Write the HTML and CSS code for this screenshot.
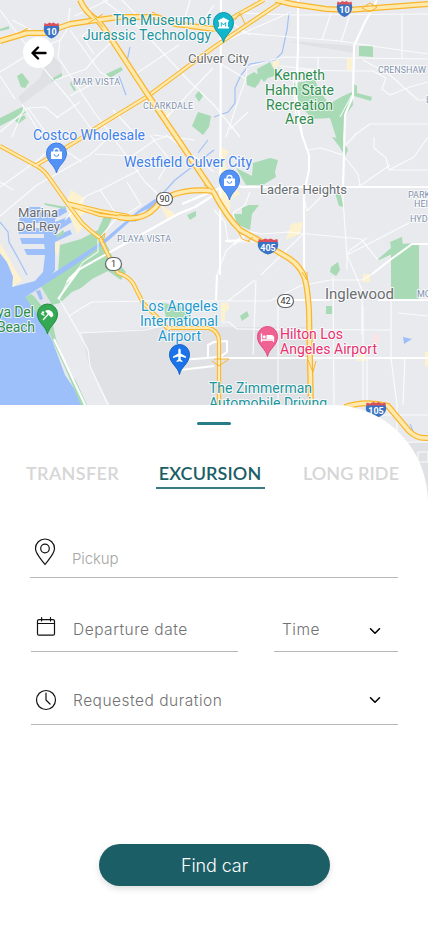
FILE: index.html
```html
<!DOCTYPE html>
<html lang="en">
<head>
<meta charset="utf-8">
<meta name="viewport" content="width=device-width">
<title>Book an excursion</title>
<link rel="stylesheet" href="styles.css">
</head>
<body>
<main class="screen">
<section class="map">
<svg class="map-art" viewBox="0 0 428 512" width="428" height="512">
  <defs>
    <path id="pin" d="M0 19C-1.5 11-10 8-10-1A10 10 0 1 1 10-1C10 8 1.500 11 0 19Z"/>
    <g id="shield">
      <path fill="#3b73c4" d="M-7-5H7C9 0 7 6 0 8.500C-7 6-9 0-7-5Z"/>
      <path fill="#d9525b" d="M-7.500-4L-7-7L-4.500-6L-2-7.500L0-6.500L2-7.500L4.500-6L7-7L7.500-4Z"/>
    </g>
  </defs>
  <rect width="428" height="512" fill="#e8eaed"/>
  <path fill="#e0e1e4" d="M50 52L61 65L62 75L22 104L18 97L40 78ZM82 333L170 327H310V405H110L88 363ZM290 41L355 46V53L300 44ZM402 440L428 443V512H402Z"/>

  <g class="water">
    <path d="M0 253L7 262L13 277L12 288L22 294L30 300L40 318L52 340L65 375L85 405H0Z"/>
    <path d="M28 207H40L45 212L50 214L65 206L67 212L55 219V222L70 216L72 222L56 232L58 235L70 230L72 234L55 242V270L45 283L14 302L5 300L12 287L35 281L43 272L45 255H27L24 249H45L44 244H22L20 238H44V234H19L18 228H44L42 223H20L19 216H28Z"/>
    <path d="M403 337L412 339L404 344Z"/>
  </g>
  <g class="sand">
    <path d="M0 243L10 260L17 273L22 280L13 287L13 275L7 262L0 253ZM67 202L71 190L84 198L84 214L80 216L83 226L78 234L69 216ZM221 147L229 152L224 160L228 174L240 194L230 200V216L222 205L219 180ZM160 205L172 211L176 217L168 220ZM291 224L303 222L300 234L286 240ZM347 58H352V70H347ZM273 60H279V66L273 69ZM363 274H370V282H363ZM221 303H229V309L225 312V320L221 322ZM276 301H285V306H276ZM357 355H366V361H357ZM425 352H428V366H425ZM165 111L169 111L169 121L166 123ZM55 243L60 241L58 256L55 252Z"/>
    <path class="pink" d="M373 334H379V343H373Z"/>
  </g>
  <g class="park">
    <path d="M0 118L22 107L27 112L0 126ZM17 76L22 73L29 82L25 88L21 87ZM51 79L62 73V76L53 82ZM106 74L121 67L123 70L110 78ZM71 81L76 90L74 91L70 84ZM15 120L24 115L26 118L18 124ZM0 29L9 26V29L0 31ZM195 96L199 90L203 96L199 102ZM198 112L211 116L209 127L203 135L192 126Z"/>
    <path d="M246 77L254 72L262 77L259 83L255 88L247 85ZM257 69L270 62L277 75L268 78L264 82L258 75ZM359 46H373V57L359 56ZM294 83L315 80L319 90L329 104L343 96L352 92L353 105L345 116L343 140H337L330 118L313 119L304 110L293 92ZM354 84L357 86V93L372 97L371 101L354 96Z"/>
    <path d="M236 168L252 176L253 163L270 158L278 160L275 172L276 177L263 185H246ZM234 214H242V208L249 205L259 205L252 214L250 230L234 223ZM332 137L343 139L348 150L345 156L339 146ZM335 193H340L344 207L339 206ZM377 260L391 248L390 242L402 237L403 249L379 260ZM391 254L400 244L419 243V300H391ZM331 267L338 262L340 270L336 276L330 272ZM240 316L247 311L249 316L242 321ZM326 306H332V314H326ZM187 215L196 211V216L190 220Z"/>
    <path d="M104 216L112 218L103 237L112 256L126 272L121 280L108 271L92 279L81 288L72 292L60 303L52 305L44 306L34 292L58 273L60 245L81 239L98 230ZM25 297L31 294L49 306L56 339L68 371L76 381L87 405H81L65 368L45 324L35 311ZM44 203L66 207L64 209L45 205ZM163 303L185 307L191 318L178 324L166 318ZM56 236L63 230L65 233L58 238Z"/>
  </g>
  <path class="island" d="M30 291L40 285L51 303L44 307L40 304Z"/>
  <path fill="#9dbffa" d="M36 291L40 290L43 299L40 300ZM14 298L72 261L101 242L139 210L155 199L160 203L139 213L109 240L75 265L16 303Z"/>
  <g class="stream">
    <path d="M289 13L287 30L282 53L275 60L250 64L241 75L235 88V103L228 112L214 117"/>
    <path d="M214 150L175 180L145 213M130 47L127 61M119 76L126 95M0 222L8 232L9 242L18 258L27 275M130 221H136M410 424L415 436M208 140L198 153"/>
  </g>

  <g class="street">
    <path d="M0 72L34 51L60 40L67 30L70 8M60 40L58 57L94 112L115 140L145 182L160 196M0 10L45 70L70 100L100 141M16 33L0 38M12 20L35 32L45 33M103 0L140 28L190 82L214 105L240 137M70 30L100 72L119 84M0 76L15 99M22 104L44 140M91 29L82 36L94 54M55 80L86 69L97 56L120 34M70 96L94 83M56 118L80 102M134 75L179 45M113 110L134 133M165 119L213 68M176 75L160 90M108 0L75 16M122 0L147 26M190 0L184 22M214 5L201 24"/>
    <path d="M0 132L28 108L45 107L58 118M0 187L38 160L60 140M0 216L37 185L90 155L110 136M13 190L0 182M24 108L12 137M28 108L51 140M50 140L82 162M95 154L132 156L155 140L165 137M65 220L86 196L100 190L139 170M100 190L119 218M127 182L141 205L118 220M120 214L98 240V252L83 262L76 272M150 135L170 160L158 180M166 135L214 172M153 135L195 140"/>
    <path d="M237 13L295 15L428 14M331 13L322 40M350 14L341 42M402 14V58M232 22L244 33L265 35L340 41L379 47L428 54M214 48L227 40L264 24L291 12M214 60L246 79L240 95L226 137M230 22L250 35M246 78L247 67L283 57L428 59M318 57V70L280 66M295 70L352 71L373 71L386 78L382 89L390 95L410 87L428 82M363 60L390 75L418 100H428M293 70L295 110L303 140M352 95L340 117M343 148L356 134L370 124L428 124M374 137V148L386 158L389 170L414 157L428 137M389 170H428M230 129L248 112"/>
    <path d="M308 150L321 148L343 155L358 174L360 184L357 188M357 188L390 165M303 193L307 211L318 200L325 192M234 245L250 232M242 230L262 234L288 232L361 239L378 260M367 238L350 250L347 255V270M344 155L343 200L347 255M347 255L409 223M347 255L362 290V335M228 242H255M214 210L225 222L228 242M244 234L226 251L217 275M238 230L233 213L245 205L250 192M303 234L261 275"/>
    <path d="M214 301H270L300 286L330 280L362 280L372 274M228 301L255 280M256 281L253 355M221 322L229 322L237 329L391 330M278 302V358M333 277L334 405M391 300V358L397 405M363 305V405M405 357L403 405M398 313L428 316M278 357V405M397 405V512M367 358V425M330 415H428M365 443L428 442M390 430V512M402 442H428M418 452H428V462H418Z"/>
    <path d="M59 300L69 278L79 270M60 300L79 333L88 350L90 366L108 405L114 418M69 316L80 309L92 302L150 301H214M80 333L145 330L166 325"/>
  </g>
  <g class="avenue">
    <path d="M67 282L78 270L178 214L195 207L214 195M182 204L230 184L242 187H428M298 0V50L296 94L302 135L309 155V170L304 193V280M377 0L365 22L354 46L353 96L345 115L344 153L343 188M221 0L220 275M58 299L79 270M214 358H428M225 241L245 240M217 275L216 300M54 339L87 409M372 274L390 260L412 244H428M285 300H330M378 300H428M180 370L214 366M180 360L220 357M208 357V345L214 342L227 341V352L220 357"/>
  </g>

  <g class="road-edge">
    <path d="M0 146L33 164Q42 168 48 176L67 203L82 223Q90 231 100 238L110 259L118 273Q128 276 133 283L143 303L158 318L167 328H209Q219 331 219 342V405"/>
    <path d="M35 166L80 139L99 126L148 96L214 47L281 2M214 30L237 15L264 0M67 203L100 211L129 216M67 204L100 215L132 219"/>
  </g>
  <g class="road-fill">
    <path d="M0 146L33 164Q42 168 48 176L67 203L82 223Q90 231 100 238L110 259L118 273Q128 276 133 283L143 303L158 318L167 328H209Q219 331 219 342V405"/>
    <path d="M35 166L80 139L99 126L148 96L214 47L281 2M214 30L237 15L264 0M67 203L100 211L129 216M67 204L100 215L132 219"/>
  </g>
  <g class="freeway-edge">
    <path d="M80 0Q85 12 97 20C105 27 110 38 150 98L175 135L214 193Q226 216 240 230L260 241L290 259C307 271 307 285 309 310L311 410"/>
    <path d="M0 41L27 33H45L70 24L97 20L120 17H157L175 24L214 29M276 0L292 4L326 9L348 10L428 4M118 217Q142 222 155 208Q171 187 214 191M345 407Q365 400 388 406L409 431Q417 439 428 438"/>
  </g>
  <g class="freeway-fill">
    <path d="M80 0Q85 12 97 20C105 27 110 38 150 98L175 135L214 193Q226 216 240 230L260 241L290 259C307 271 307 285 309 310L311 410"/>
    <path d="M0 41L27 33H45L70 24L97 20L120 17H157L175 24L214 29M276 0L292 4L326 9L348 10L428 4M118 217Q142 222 155 208Q171 187 214 191M345 407Q365 400 388 406L409 431Q417 439 428 438"/>
  </g>
  <g class="ramp">
    <path d="M87 24L103 14M91 13L103 27M148 17L153 12L159 17M19 33L28 28M235 20L240 13L245 24M362 8L370 3L377 7L370 12ZM99 239L105 233L103 243M238 231L242 239L250 242M248 241L253 237M213 190L204 185M302 272L307 280V272M308 360L313 372L316 361M214 359H229L219 366L212 361"/>
  </g>

  <g class="route">
    <rect x="156.500" y="192.500" width="16" height="13" rx="6.500"/><text x="164.500" y="202.300">90</text>
    <rect x="105.500" y="257.500" width="16" height="13" rx="6.500"/><text x="113.500" y="267.300">1</text>
    <rect x="277.500" y="294.500" width="16" height="13" rx="6.500"/><text x="285.500" y="304.300">42</text>
  </g>
  <g class="interstate">
    <use href="#shield" x="51.500" y="30"/><text x="51.500" y="34.500">10</text>
    <use href="#shield" x="344.500" y="8.500"/><text x="344.500" y="13">10</text>
    <use href="#shield" transform="translate(268 246) scale(1.32 1)"/><text x="268" y="251">405</text>
    <use href="#shield" transform="translate(376 409.500) scale(1.320 1)"/><text x="376" y="414.200">105</text>
  </g>

  <g class="label district">
    <text x="73" y="84.500" textLength="47">MAR VISTA</text>
    <text x="143" y="108.500" textLength="50">CLARKDALE</text>
    <text x="117" y="241.500" textLength="54">PLAYA VISTA</text>
    <text x="378" y="73" textLength="48">CRENSHAW</text>
    <text x="408" y="197.500">PARK</text><text x="414" y="207">HEI</text><text x="410" y="221.500">HYD</text><text x="417" y="297">MC</text><text x="426" y="103">L</text>
  </g>
  <g class="label city">
    <text x="188" y="63" textLength="61">Culver City</text>
    <text x="18" y="217" textLength="40">Marina</text>
    <text x="17" y="230.500" textLength="43">Del Rey</text>
    <text x="260" y="194" textLength="87">Ladera Heights</text>
    <text class="large" x="325" y="299" textLength="69">Inglewood</text>
  </g>
  <g class="label teal">
    <text x="113" y="25" textLength="98">The Museum of</text>
    <text x="83" y="40" textLength="128">Jurassic Technology</text>
    <text x="209" y="393" textLength="103">The Zimmerman</text>
    <text x="209" y="408" textLength="118">Automobile Driving</text>
  </g>
  <g class="label green">
    <text x="274" y="80" textLength="51">Kenneth</text>
    <text x="265" y="95" textLength="69">Hahn State</text>
    <text x="266" y="109.500" textLength="67">Recreation</text>
    <text x="285" y="124" textLength="29">Area</text>
    <text x="-3" y="317" textLength="37">ya Del</text>
    <text x="-3" y="332" textLength="38">Beach</text>
  </g>
  <g class="label blue">
    <text x="33" y="140" textLength="112">Costco Wholesale</text>
    <text x="124" y="167" textLength="128">Westfield Culver City</text>
  </g>
  <g class="label sky">
    <text x="141" y="311" textLength="77">Los Angeles</text>
    <text x="140" y="326" textLength="78">International</text>
    <text x="158" y="341" textLength="43">Airport</text>
  </g>
  <g class="label rose">
    <text x="280" y="339" textLength="63">Hilton Los</text>
    <text x="280" y="354" textLength="97">Angeles Airport</text>
  </g>

  <g transform="translate(223.500 23.500)">
    <use href="#pin" fill="#12b5c9" stroke="#0794a8"/>
    <path fill="#fff" d="M-5.500-3L0-6L5.500-3V-2H4.500V3.500H5.500V5H-5.500V3.500H-4.500V-2H-5.500Z"/>
    <path fill="none" stroke="#12b5c9" d="M-2.200 3V-1L0 1.500L2.200-1V3"/>
  </g>
  <g transform="translate(56.500 154)">
    <use href="#pin" fill="#5491f5" stroke="#3e7de4"/>
    <path fill="#fff" d="M-5.500-2.500H5.500V5H-5.500Z"/>
    <path fill="none" stroke="#fff" stroke-width="1.300" d="M-2.500-1V-3A2.500 2.500 0 0 1 2.500-3V-1"/>
    <path fill="none" stroke="#5491f5" d="M-2.300 0A2.300 2.300 0 0 0 2.300 0"/>
  </g>
  <g transform="translate(229.500 181)">
    <use href="#pin" fill="#5491f5" stroke="#3e7de4"/>
    <path fill="#fff" d="M-5.500-2.500H5.500V5H-5.500Z"/>
    <path fill="none" stroke="#fff" stroke-width="1.300" d="M-2.500-1V-3A2.500 2.500 0 0 1 2.500-3V-1"/>
    <path fill="none" stroke="#5491f5" d="M-2.300 0A2.300 2.300 0 0 0 2.300 0"/>
  </g>
  <g transform="translate(47.500 315)">
    <use href="#pin" fill="#34a853" stroke="#238b40"/>
    <path fill="#fff" d="M-2.500-4C1-6.500 6-4 5.800 1L3.500 2.500L-2.500-4Z"/>
    <path fill="none" stroke="#fff" stroke-width="1.300" d="M1-1L-4.500 5M-6.500-1.500L-3 .5"/>
    <circle cx="-4.500" cy="-2.500" r="1.200" fill="#fff"/>
  </g>
  <g transform="translate(179.500 355.500)">
    <use href="#pin" fill="#1a73e8" stroke="#185fc3"/>
    <path fill="#fff" d="M0-7C1-7 1.200-6 1.200-5V-2L6.500 1V2.500L1.200 1V4L3 5.500V6.500L0 5.700L-3 6.500V5.500L-1.200 4V1L-6.500 2.500V1L-1.200-2V-5C-1.200-6-1-7 0-7Z"/>
  </g>
  <g transform="translate(267.500 337.500)">
    <use href="#pin" fill="#f06292" stroke="#dc4a82"/>
    <path fill="none" stroke="#fff" stroke-width="1.300" d="M-6-4V4.500M-6 2.500H6M6 4.500V-1"/>
    <path fill="#fff" d="M-1-2.500H4Q6-2.500 6-.5V1.500H-1Z"/>
    <circle cx="-3.300" cy="-.7" r="1.600" fill="#fff"/>
  </g>
</svg>
<button class="back" aria-label="Back">
  <svg viewBox="0 0 16 14" width="16" height="14"><path d="M14.500 7H1.800M7 1.500L1.500 7L7 12.500"/></svg>
</button>
</section>

<section class="sheet">
  <div class="handle"></div>
  <nav class="tabs">
    <a class="tab transfer">TRANSFER</a>
    <a class="tab active">EXCURSION</a>
    <a class="tab long">LONG RIDE</a>
  </nav>
  <form class="form">
    <div class="field pickup">
      <svg class="icon" viewBox="0 0 22 28" width="22" height="28"><path d="M11 26.500C7.500 21.500 1.500 16 1.500 10.500A9.500 9.500 0 0 1 20.500 10.500C20.500 16 14.500 21.500 11 26.500Z"/><circle cx="11" cy="10.500" r="4.300"/></svg>
      <span class="caption">Pickup</span>
    </div>
    <div class="row">
      <div class="field date">
        <svg class="icon" viewBox="0 0 22 22" width="22" height="22"><rect x="2.500" y="3.600" width="17" height="15.600" rx="1.500"/><path d="M2.500 7.500H19.500M6.600 1.500V5M15.500 1.500V5"/></svg>
        <span class="caption">Departure date</span>
      </div>
      <div class="field time">
        <span class="caption">Time</span>
        <svg class="chevron" viewBox="0 0 12 8" width="12" height="8"><path d="M1.500 1.800L6 6.200L10.500 1.800"/></svg>
      </div>
    </div>
    <div class="field duration">
      <svg class="icon" viewBox="0 0 22 22" width="22" height="22"><circle cx="11" cy="11" r="9.500"/><path d="M11 4V11L15 15"/></svg>
      <span class="caption">Requested duration</span>
      <svg class="chevron" viewBox="0 0 12 8" width="12" height="8"><path d="M1.500 1.800L6 6.200L10.500 1.800"/></svg>
    </div>
    <button class="submit" type="button">Find car</button>
  </form>
</section>
</main>
</body>
</html>
```
FILE: styles.css
```css
* { box-sizing: border-box; }
body { margin: 0; background: #fff; }
.screen { display: grid; grid-template-rows: 405px 521px; width: 428px; height: 926px; overflow: hidden; }
.map { position: relative; }
.map-art { display: block; font-family: Roboto, "Liberation Sans", sans-serif; }
.water { fill: #9dbffa; }
.sand { fill: #fdf2d0; }
.pink { fill: #fbe4e6; }
.park { fill: #a8dab5; }
.island { fill: #e0e3e8; }
.stream { fill: none; stroke: #a3c1f7; stroke-width: 1.2; }
.street { fill: none; stroke: #fff; stroke-opacity: .8; stroke-width: 1.2; stroke-linejoin: round; }
.avenue { fill: none; stroke: #fff; stroke-width: 2.1; stroke-linejoin: round; }
.road-edge, .freeway-edge { fill: none; stroke: #f9b52c; stroke-linejoin: round; }
.road-edge { stroke-width: 4.2; }
.freeway-edge { stroke-width: 6; }
.road-fill, .freeway-fill { fill: none; stroke: #ffe9ad; stroke-linejoin: round; }
.road-fill { stroke-width: 2.2; }
.freeway-fill { stroke-width: 3.5; }
.ramp { fill: none; stroke: #f9b52c; stroke-width: 1; }
.route rect { fill: #fff; stroke: #62666c; stroke-width: 1.2; }
.route text { font-size: 9px; fill: #333; text-anchor: middle; }
.interstate text { font-size: 9px; font-weight: 700; fill: #fff; text-anchor: middle; }
.label { font-size: 14px; paint-order: stroke; stroke: #fff; stroke-opacity: .8; stroke-width: 2px; stroke-linejoin: round; }
.district { font-size: 9px; fill: #8291ad; }
.city { font-size: 13px; fill: #6a6d72; }
.large { font-size: 15px; }
.teal { fill: #1a959e; }
.green { fill: #2f8d4e; }
.blue { fill: #3f80ea; }
.sky { fill: #2299cf; }
.rose { fill: #e8306f; }
.back { position: absolute; left: 23px; top: 37px; width: 31px; height: 31px; display: grid; place-items: center; padding: 0; border: 0; border-radius: 50%; background: #fff; }
.back svg { fill: none; stroke: #000; stroke-width: 2.4; stroke-linecap: round; stroke-linejoin: round; }

.sheet { position: relative; display: flex; flex-direction: column; background: #fff; border-top-right-radius: 95px 98px; }
.handle { width: 34px; height: 3px; margin: 17px 0 0 197px; border-radius: 2px; background: #277c85; }
.tabs { display: flex; justify-content: space-between; height: 60px; padding: 34px 29px 0 26px; font: 600 18px/28px Lato, sans-serif; color: #d6d6d6; }
.tab { display: flex; justify-content: center; height: 30px; white-space: nowrap; }
.transfer { width: 93px; letter-spacing: .35px; }
.active { width: 109px; margin-right: 2px; border-bottom: 2px solid #3b7b83; color: #1b5e66; letter-spacing: .1px; }
.long { width: 96px; letter-spacing: .1px; }
.form { display: flex; flex-direction: column; padding: 0 30px; font: 300 15.5px/20px Inter, sans-serif; letter-spacing: .5px; color: #727272; }
.field { display: flex; align-items: center; border-bottom: 1px solid #b8b8b8; }
.icon { flex: none; fill: none; stroke: #111; stroke-width: 1.2; stroke-linejoin: round; stroke-linecap: round; }
.pickup { height: 53px; margin-top: 40px; padding: 1px 0 0 4px; }
.pickup .caption { margin: 14px 0 0 16px; color: #a5a5a5; font-size: 15px; letter-spacing: -.1px; }
.row { display: flex; justify-content: space-between; margin-left: 1px; }
.date { width: 207px; height: 74px; padding: 30px 0 0 4px; }
.date .icon { margin-top: -5px; }
.date .caption, .duration .caption { margin-left: 16px; }
.time { width: 124px; height: 74px; justify-content: space-between; padding: 30px 17px 0 8px; }
.time .chevron { margin-top: 2px; }
.duration { height: 73px; margin-left: 1px; padding: 24px 17px 0 4px; }
.duration .caption { margin-top: 2px; }
.duration .chevron { margin-left: auto; }
.chevron { fill: none; stroke: #000; stroke-width: 1.6; stroke-linecap: round; stroke-linejoin: round; }
.submit { width: 231px; height: 42px; margin: 119px 0 0 69px; padding: 1px 0 0; border: 0; border-radius: 21px; background: #1c5e66; color: #fff; font: 300 18px/42px Inter, sans-serif; letter-spacing: -.1px; box-shadow: 0 3px 6px rgba(0,0,0,.13); }
```
